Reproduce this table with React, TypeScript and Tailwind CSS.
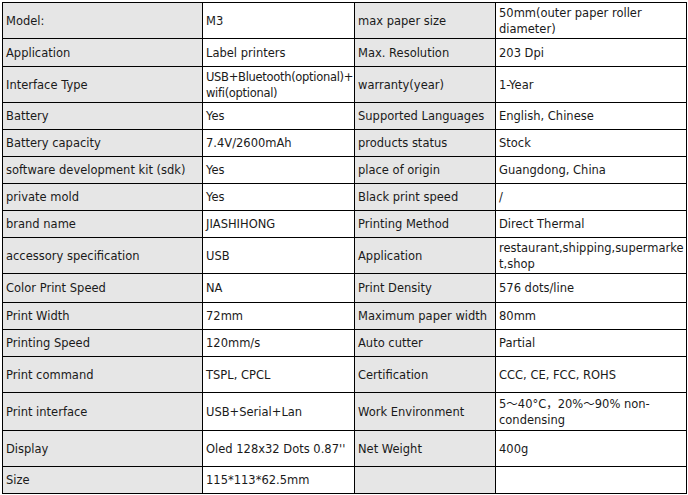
const rows: { h: number; cells: React.ReactNode[] }[] = [
  { h: 36, cells: ['Model:', 'M3', 'max paper size', <>50mm(outer paper roller<br />diameter)</>] },
  { h: 28, cells: ['Application', 'Label printers', 'Max. Resolution', '203 Dpi'] },
  {
    h: 36,
    cells: [
      'Interface Type',
      <span className="tracking-[-0.3px]">USB+Bluetooth(optional)+<br />wifi(optional)</span>,
      'warranty(year)',
      '1-Year',
    ],
  },
  { h: 27, cells: ['Battery', 'Yes', 'Supported Languages', 'English, Chinese'] },
  { h: 27, cells: ['Battery capacity', '7.4V/2600mAh', 'products status', 'Stock'] },
  { h: 27, cells: ['software development kit (sdk)', 'Yes', 'place of origin', 'Guangdong, China'] },
  { h: 27, cells: ['private mold', 'Yes', 'Black print speed', '/'] },
  { h: 27, cells: ['brand name', 'JIASHIHONG', 'Printing Method', 'Direct Thermal'] },
  { h: 36, cells: ['accessory specification', 'USB', 'Application', <>restaurant,shipping,supermarke<br />t,shop</>] },
  { h: 29, cells: ['Color Print Speed', 'NA', 'Print Density', '576 dots/line'] },
  { h: 27, cells: ['Print Width', '72mm', 'Maximum paper width', '80mm'] },
  { h: 27, cells: ['Printing Speed', '120mm/s', 'Auto cutter', 'Partial'] },
  { h: 36, cells: ['Print command', 'TSPL, CPCL', 'Certification', 'CCC, CE, FCC, ROHS'] },
  { h: 38, cells: ['Print interface', 'USB+Serial+Lan', 'Work Environment', <>5～40°C，20%～90% non-<br />condensing</>] },
  { h: 36, cells: ['Display', "Oled 128x32 Dots 0.87''", 'Net Weight', '400g'] },
  { h: 27, cells: ['Size', '115*113*62.5mm', '', ''] },
];

export default function App() {
  return (
    <div className="bg-white w-[688px] h-[495px] pt-[2px] pl-[2px]">
      <table className="table-fixed border-collapse w-[684px] text-[11.5px] leading-[16px] text-[#1a1a1a] font-['DejaVu_Sans','Noto_Sans_CJK_SC',sans-serif]">
        <colgroup>
          <col className="w-[200px]" />
          <col className="w-[152px]" />
          <col className="w-[141px]" />
          <col className="w-[191px]" />
        </colgroup>
        <tbody>
          {rows.map((r, i) => (
            <tr key={i} style={{ height: r.h }}>
              {r.cells.map((c, j) => (
                <td
                  key={j}
                  className={`border border-black px-[3px] py-0 align-middle whitespace-nowrap overflow-hidden ${
                    j % 2 === 0 ? 'bg-[#e6e6e6]' : 'bg-white'
                  }`}
                >
                  {c}
                </td>
              ))}
            </tr>
          ))}
        </tbody>
      </table>
    </div>
  );
}
